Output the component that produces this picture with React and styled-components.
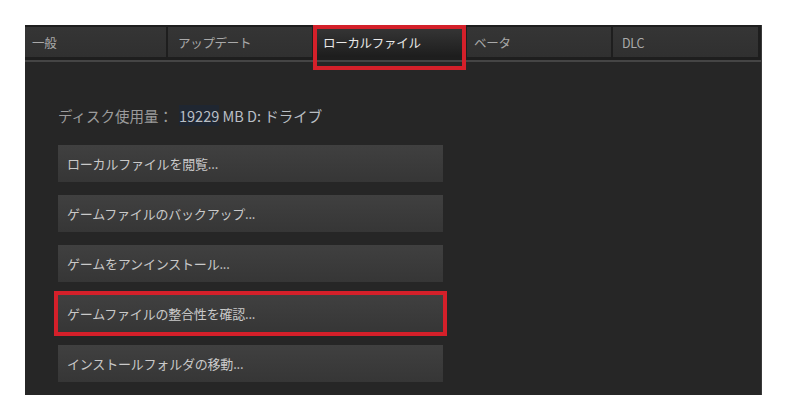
import React from "react";
import styled, { createGlobalStyle } from "styled-components";

const GlobalStyle = createGlobalStyle`
  body {
    margin: 0;
    background: #fff;
    font-family: "Noto Sans CJK JP", "Liberation Sans", sans-serif;
  }
`;

const Page = styled.div`
  width: 800px;
  height: 404px;
  padding: 25px 0 0 25px;
  box-sizing: border-box;
`;

const Panel = styled.div`
  width: 737px;
  height: 370px;
  background: #262626;
  display: flex;
  flex-direction: column;
  border-right: 1px solid #3a3a3a;
  box-sizing: border-box;
`;

const TabBar = styled.div`
  display: grid;
  grid-template-columns: 141px 144px 151px 144px 145px;
  column-gap: 2px;
  padding: 2px 6px 3px 0;
  background: #1e1e1e;
  border-bottom: 2px solid #454545;
`;

const Tab = styled.div`
  position: relative;
  height: 30px;
  display: flex;
  align-items: center;
  padding-left: ${(p) => (p.$pad ? p.$pad : 8)}px;
  font-size: 12.5px;
  letter-spacing: -0.3px;
  color: ${(p) => (p.$active ? "#e8e8e8" : "#a9a9a9")};
  background: ${(p) =>
    p.$active
      ? "linear-gradient(#363636, #1d1d1d)"
      : "linear-gradient(#353535, #303030)"};
  box-sizing: border-box;
`;

const Highlight = styled.div`
  position: absolute;
  left: -1px;
  right: -1px;
  top: -2px;
  bottom: -13px;
  border: 4px solid #d4202a;
  pointer-events: none;
`;

const Body = styled.div`
  display: flex;
  flex-direction: column;
  padding: 42px 0 0 33px;
`;

const DiskLine = styled.div`
  height: 22px;
  display: flex;
  align-items: center;
  font-size: 14.5px;
  color: #9c9c9c;
  margin-bottom: 19px;
`;

const DiskValue = styled.span`
  color: #b9bec4;
  font-weight: 400;
  margin-left: 6px;
`;

const Sel = styled.span`
  background: #1f2631;
`;

const ButtonList = styled.div`
  display: flex;
  flex-direction: column;
  gap: 13px;
`;

const Button = styled.div`
  width: 385px;
  height: 37px;
  display: flex;
  align-items: center;
  padding-left: 9px;
  box-sizing: border-box;
  font-size: 13px;
  letter-spacing: -0.2px;
  color: #c9c9c9;
  background: linear-gradient(#404040, #363636);
  box-shadow: ${(p) => (p.$marked ? "0 0 0 4px #d4202a" : "none")};
`;

const tabs = [
  { label: "一般", pad: 7 },
  { label: "アップデート", pad: 10 },
  { label: "ローカルファイル", pad: 9, active: true },
  { label: "ベータ", pad: 7 },
  { label: "DLC", pad: 9 },
];

const buttons = [
  "ローカルファイルを閲覧...",
  "ゲームファイルのバックアップ...",
  "ゲームをアンインストール...",
  "ゲームファイルの整合性を確認...",
  "インストールフォルダの移動...",
];

export default function App() {
  return (
    <Page>
      <GlobalStyle />
      <Panel>
        <TabBar>
          {tabs.map((t) => (
            <Tab key={t.label} $active={t.active} $pad={t.pad}>
              {t.label}
              {t.active && <Highlight />}
            </Tab>
          ))}
        </TabBar>
        <Body>
          <DiskLine>
            ディスク使用量：
            <DiskValue>
              <Sel>19229</Sel> MB D: ドライブ
            </DiskValue>
          </DiskLine>
          <ButtonList>
            {buttons.map((b, i) => (
              <Button key={b} $marked={i === 3}>
                {b}
              </Button>
            ))}
          </ButtonList>
        </Body>
      </Panel>
    </Page>
  );
}
